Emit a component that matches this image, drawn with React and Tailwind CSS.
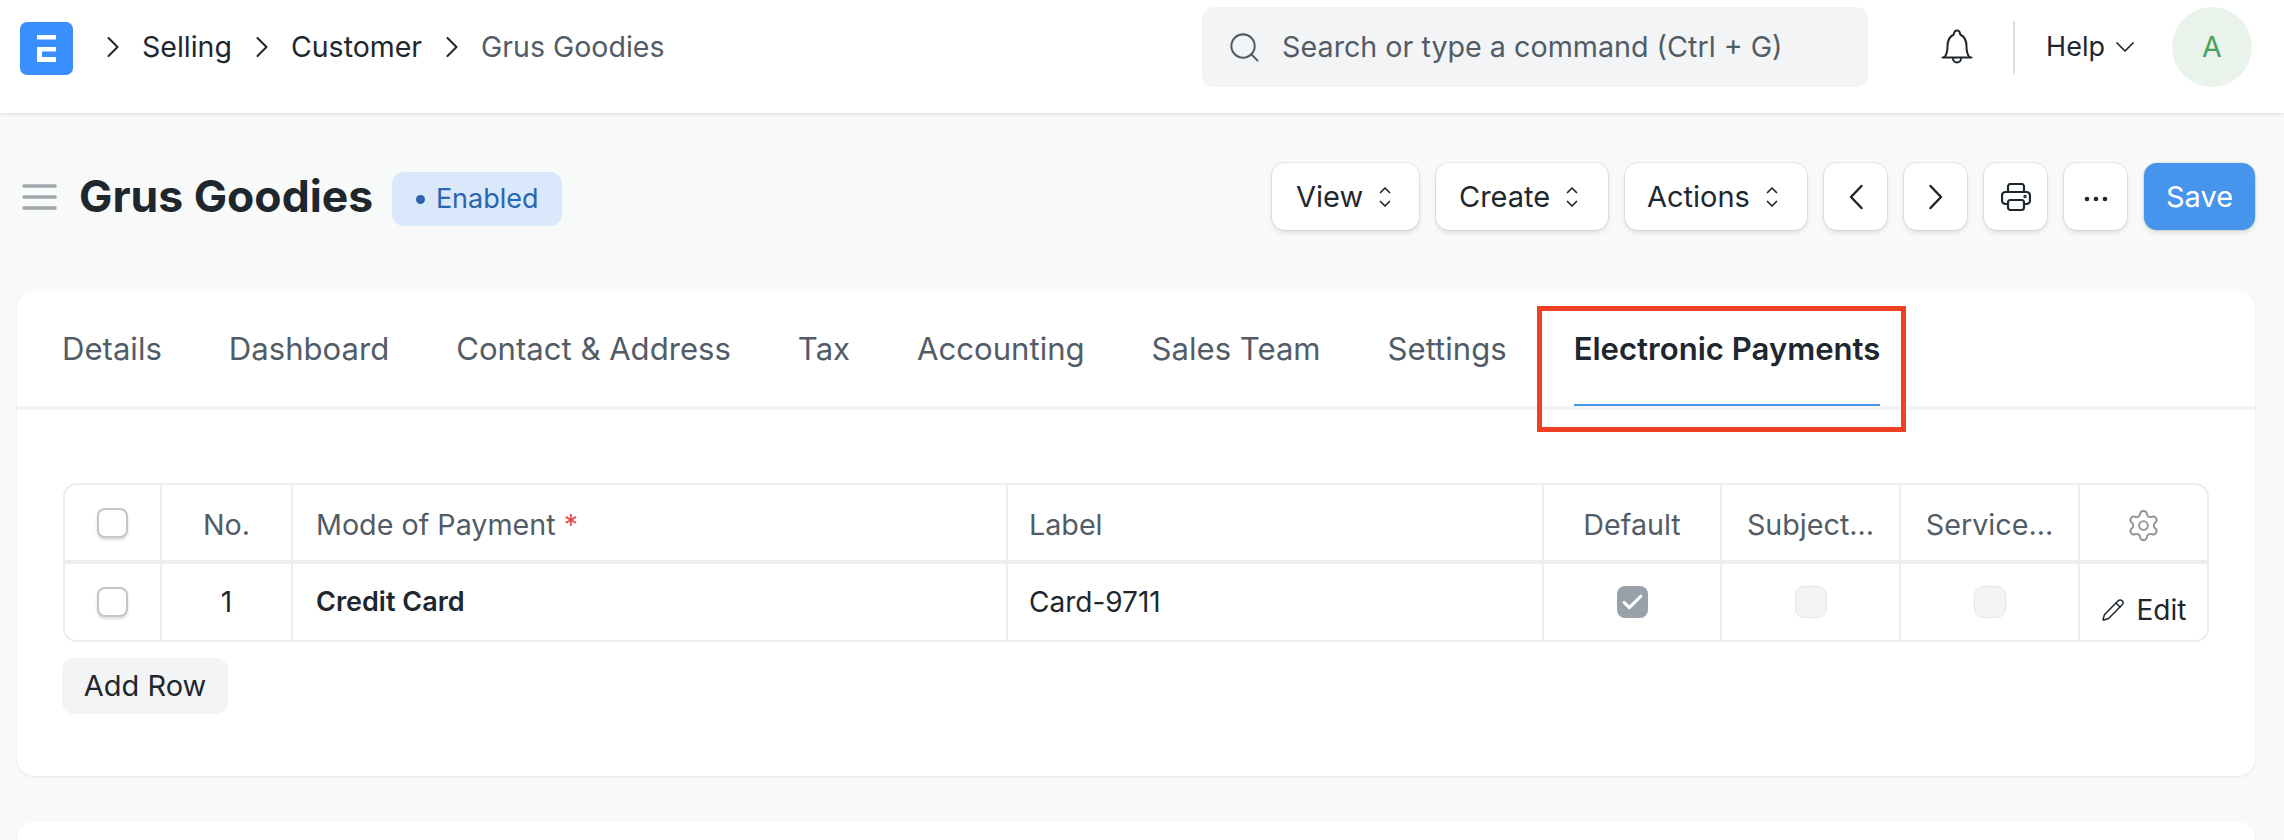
import { ChevronRight, ChevronDown, Search, Settings, Pencil, Check } from 'lucide-react'

function Logo() {
  return (
    <div className="mt-[3px] w-[53px] h-[53px] rounded-[7px] bg-[#3a8ffe] flex items-center justify-center shrink-0">
      <svg width="19" height="27" viewBox="0 0 19 27" fill="#fff">
        <path d="M0 0h19v4.500H0zM0 12h19v4.500H5V22h14v5H0z" />
      </svg>
    </div>
  )
}

function BellIcon() {
  return (
    <svg width="32" height="36" viewBox="0 0 32 36" fill="none" stroke="#1f272e" strokeWidth="2" strokeLinecap="round" strokeLinejoin="round">
      <path d="M3.500 28c2-2 3-5 3-11C6.500 10.500 9.500 7 12.800 5.500 13 3 14.500 1.500 16 1.500s3 1.500 3.200 4C22.500 7 25.500 10.500 25.500 17c0 6 1 9 3 11" />
      <path d="M1.500 28.500h29" />
      <path d="M12 29.500a4 4 0 0 0 8 0" />
    </svg>
  )
}

function UpDown() {
  return (
    <svg width="12" height="22" viewBox="0 0 12 22" fill="none" stroke="#1f272e" strokeWidth="1.700" strokeLinecap="round" strokeLinejoin="round">
      <path d="M1.500 6.500L6 2l4.500 4.500M1.500 15.500L6 20l4.500-4.500" />
    </svg>
  )
}

function Arrow({ d }) {
  return (
    <svg width="16" height="26" viewBox="0 0 16 26" fill="none" stroke="#1f272e" strokeWidth="2.500" strokeLinecap="round" strokeLinejoin="round">
      <path d={d} />
    </svg>
  )
}

function PrinterIcon() {
  return (
    <svg width="30" height="28" viewBox="0 0 30 28" fill="none" stroke="#1f272e" strokeWidth="2.200" strokeLinecap="round" strokeLinejoin="round">
      <path d="M7 9V3.500a2.500 2.500 0 0 1 2.500-2.500h11A2.500 2.500 0 0 1 23 3.500V9" />
      <path d="M7 21H4.500A3.500 3.500 0 0 1 1 17.500v-5A3.500 3.500 0 0 1 4.500 9h21a3.500 3.500 0 0 1 3.500 3.500v5a3.500 3.500 0 0 1-3.500 3.500H23" />
      <rect x="7" y="17" width="16" height="10" rx="2.500" />
      <circle cx="24" cy="13.500" r="0.600" fill="#1f272e" />
    </svg>
  )
}

function Dots() {
  return (
    <svg width="24" height="6" viewBox="0 0 24 6" fill="#1f272e" className="mt-[5px]">
      <circle cx="3" cy="3" r="2.300" />
      <circle cx="12" cy="3" r="2.300" />
      <circle cx="21" cy="3" r="2.300" />
    </svg>
  )
}

function ToolButton({ className = '', primary, children }) {
  const tone = primary ? 'bg-[#4794ec] text-white' : 'bg-white text-[#1f272e]'
  return (
    <button className={`h-[67px] rounded-[13px] shadow-[0_0_0_1px_rgba(0,0,0,0.07),0_3px_5px_rgba(0,0,0,0.1)] text-[29px] flex items-center ${tone} ${className}`}>
      {children}
    </button>
  )
}

function Crumb({ label, muted }) {
  return (
    <div className="flex items-center">
      <ChevronRight size={36} strokeWidth={1.4} className="text-[#1f272e] mr-[11px]" />
      <span className={muted ? 'text-[#525c66]' : 'text-[#1f272e]'}>{label}</span>
    </div>
  )
}

function Box({ state }) {
  if (state === 'checked') {
    return (
      <div className="w-[31px] h-[32px] rounded-[8px] bg-[#98a1a9] flex items-center justify-center">
        <Check size={25} strokeWidth={3} className="text-white" />
      </div>
    )
  }
  if (state === 'disabled') {
    return <div className="w-[32px] h-[32px] rounded-[9px] bg-[#f3f4f4] border border-[#e4e6e6]" />
  }
  return <div className="w-[31px] h-[30px] rounded-[8px] bg-white border-2 border-[#c0c6cc] shadow-[0_2px_3px_rgba(0,0,0,0.15)]" />
}

const tabs = ['Details', 'Dashboard', 'Contact & Address', 'Tax', 'Accounting', 'Sales Team', 'Settings']
const cols = 'grid grid-cols-[97px_131px_715px_536px_178px_179px_179px_1fr]'
const cell = 'border-r-2 border-[#ebeef0] flex items-center'

export default function App() {
  return (
    <div className="relative h-[840px] overflow-hidden bg-[#f8f9f9] font-['Inter',sans-serif]">
      {/* Navbar */}
      <header className="h-[113px] bg-white shadow-[0_1px_3px_rgba(0,0,0,0.12)] flex items-center pb-[19px] pl-[20px] pr-[32px] text-[28.700px]">
        <Logo />
        <nav className="flex items-center gap-[12px] ml-[22px] text-[28.500px]">
          <Crumb label="Selling" />
          <Crumb label="Customer" />
          <Crumb label="Grus Goodies" muted />
        </nav>
        <div className="ml-auto w-[666px] h-[80px] rounded-[12px] bg-[#f3f4f6] flex items-center pl-[25px] text-[#525c66]">
          <Search size={35} strokeWidth={1.4} className="mr-[20px]" />
          <span>Search or type a command (Ctrl + G)</span>
        </div>
        <div className="ml-[73px]"><BellIcon /></div>
        <div className="w-[2px] h-[53px] bg-[#d9dee2] ml-[40px]" />
        <div className="flex items-center ml-[31px] text-[#1f272e] text-[27px]">
          <span>Help</span>
          <ChevronDown size={32} strokeWidth={1.3} className="ml-[4px]" />
        </div>
        <div className="ml-[31px] w-[80px] h-[80px] rounded-full bg-[#e9f3ec] text-[#48a05b] flex items-center justify-center">A</div>
      </header>

      {/* Page head */}
      <div className="h-[178px] flex items-center pb-[11px] pl-[22px] pr-[29px]">
        <svg width="35" height="26" viewBox="0 0 35 26" stroke="#a0a6ac" strokeWidth="3.500" strokeLinecap="round">
          <path d="M2 2h31M2 13h31M2 24h31" />
        </svg>
        <h1 className="ml-[22px] text-[44.500px] font-bold text-[#1f272e]">Grus Goodies</h1>
        <div className="mt-[5px] ml-[19px] h-[54px] w-[170px] rounded-[12px] bg-[#d9e9fb] text-[#2a65ad] text-[27px] flex items-center justify-center gap-[11px]">
          <span className="w-[9px] h-[9px] rounded-full bg-[#2a65ad]" />
          Enabled
        </div>
        <div className="ml-auto flex gap-[17px]">
          <ToolButton className="w-[147px] pl-[24px] gap-[16px]">View <UpDown /></ToolButton>
          <ToolButton className="w-[172px] pl-[23px] gap-[16px]">Create <UpDown /></ToolButton>
          <ToolButton className="w-[182px] pl-[22px] gap-[16px]">Actions <UpDown /></ToolButton>
          <ToolButton className="w-[63px] justify-center"><Arrow d="M13.500 2L3 13l10.500 11" /></ToolButton>
          <ToolButton className="w-[63px] justify-center"><Arrow d="M2.500 2L13 13 2.500 24" /></ToolButton>
          <ToolButton className="w-[63px] justify-center"><PrinterIcon /></ToolButton>
          <ToolButton className="w-[63px] justify-center"><Dots /></ToolButton>
          <ToolButton primary className="w-[111px] justify-center">Save</ToolButton>
        </div>
      </div>

      {/* Form card */}
      <section className="ml-[17px] mr-[29px] h-[485px] rounded-[18px] bg-white shadow-[0_1px_3px_rgba(0,0,0,0.08)]">
        <div className="h-[119px] border-b-4 border-[#f3f4f4] flex items-stretch gap-[67px] pl-[45px] text-[31.100px] text-[#525c66]">
          {tabs.map((t) => (
            <div key={t} className="pt-[35px]">{t}</div>
          ))}
          <div className="pt-[35px] font-semibold text-[#1f272e] border-b-2 border-[#4794ec]">Electronic Payments</div>
        </div>

        <div className="pl-[46px] pr-[46px] pt-[73px]">
          <div className="rounded-[14px] border-2 border-[#ebeef0] text-[28.700px]">
            <div className={`${cols} h-[79px] border-b-4 border-[#ebeef0] text-[#525c66]`}>
              <div className={`${cell} justify-center`}><Box /></div>
              <div className={`${cell} justify-center pt-[5px]`}>No.</div>
              <div className={`${cell} pl-[23px] pt-[5px]`}>Mode of Payment<span className="text-[#e24c4c] ml-[8px]">*</span></div>
              <div className={`${cell} pl-[21px] pt-[5px]`}>Label</div>
              <div className={`${cell} justify-center pt-[5px]`}>Default</div>
              <div className={`${cell} justify-center pt-[5px]`}>Subject...</div>
              <div className={`${cell} justify-center pt-[5px]`}>Service...</div>
              <div className="flex items-center justify-center pt-[5px]"><Settings size={35} strokeWidth={1.3} className="text-[#8d949a]" /></div>
            </div>
            <div className={`${cols} h-[76px] text-[#1f272e] text-[28px]`}>
              <div className={`${cell} justify-center`}><Box /></div>
              <div className={`${cell} justify-center`}>1</div>
              <div className={`${cell} pl-[23px] font-semibold text-[27px]`}>Credit Card</div>
              <div className={`${cell} pl-[21px]`}>Card-9711</div>
              <div className={`${cell} justify-center`}><Box state="checked" /></div>
              <div className={`${cell} justify-center`}><Box state="disabled" /></div>
              <div className={`${cell} justify-center`}><Box state="disabled" /></div>
              <div className="flex items-center justify-center pt-[16px] gap-[12px]"><Pencil size={24} strokeWidth={1.5} />Edit</div>
            </div>
          </div>
          <button className="mt-[16px] -ml-[1px] w-[166px] h-[56px] rounded-[12px] bg-[#f3f4f6] text-[29px] text-[#1f272e]">Add Row</button>
        </div>
      </section>

      {/* Next card, cut by the window */}
      <section className="mt-[45px] ml-[17px] mr-[29px] h-[80px] rounded-[18px] bg-white shadow-[0_1px_3px_rgba(0,0,0,0.08)]" />

      {/* Red annotation round the active tab */}
      <div className="absolute left-[1537px] top-[306px] w-[369px] h-[126px] border-[5px] border-[#f04023]" />
    </div>
  )
}
